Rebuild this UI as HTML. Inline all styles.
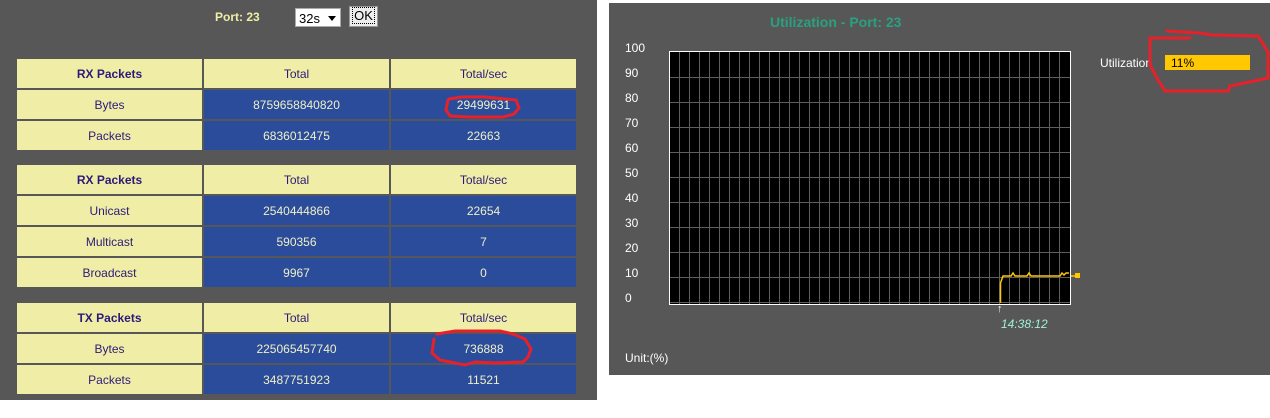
<!DOCTYPE html>
<html><head><style>
body{margin:0;width:1270px;height:418px;background:#fff;position:relative;overflow:hidden;font-family:"Liberation Sans",sans-serif;font-size:12px}
#L{position:absolute;left:0;top:0;width:597px;height:400px;background:#575757}
#R{position:absolute;left:609px;top:3px;width:661px;height:372px;background:#575757}
.tb{position:absolute;left:17px;border-collapse:separate;border-spacing:2px 2px;margin:-2px}
.tb td{width:185px;height:29px;padding:0;text-align:center;font-size:12px}
.y{background:#f0eea6;color:#2b1a7a}
.b{background:#2b4c9b;color:#eef0c8}
.h{font-weight:bold}
.abs{position:absolute}
</style></head><body>
<div id="L">
<div class="abs" style="left:215px;top:10px;color:#f0eea6;font-weight:bold;font-size:12px">Port: 23</div>
<div class="abs" style="left:295px;top:8px;width:46px;height:19px;background:#fff;border:1px solid #aaa;box-sizing:border-box;font-size:13px;padding:2px 0 0 3px">32s<span style="position:absolute;right:4px;top:7px;border-left:4px solid transparent;border-right:4px solid transparent;border-top:5px solid #000"></span></div>
<div class="abs" style="left:349px;top:6px;width:29px;height:21px;background:#eee;border:1px solid #999;box-sizing:border-box;font-size:13px;text-align:center;line-height:18px"><span style="border:1px dotted #000;padding:0 1px">OK</span></div>
<table class="tb" style="top:59px"><tr><td class="y h">RX Packets</td><td class="y">Total</td><td class="y">Total/sec</td></tr>
<tr><td class="y">Bytes</td><td class="b">8759658840820</td><td class="b">29499631</td></tr>
<tr><td class="y">Packets</td><td class="b">6836012475</td><td class="b">22663</td></tr></table>
<table class="tb" style="top:165px"><tr><td class="y h">RX Packets</td><td class="y">Total</td><td class="y">Total/sec</td></tr>
<tr><td class="y">Unicast</td><td class="b">2540444866</td><td class="b">22654</td></tr>
<tr><td class="y">Multicast</td><td class="b">590356</td><td class="b">7</td></tr>
<tr><td class="y">Broadcast</td><td class="b">9967</td><td class="b">0</td></tr></table>
<table class="tb" style="top:303px"><tr><td class="y h">TX Packets</td><td class="y">Total</td><td class="y">Total/sec</td></tr>
<tr><td class="y">Bytes</td><td class="b">225065457740</td><td class="b">736888</td></tr>
<tr><td class="y">Packets</td><td class="b">3487751923</td><td class="b">11521</td></tr></table>
</div>
<div id="R"></div>
<div class="abs" style="left:770px;top:14px;color:#2aa080;font-weight:bold;font-size:14px">Utilization - Port: 23</div>
<div class="abs" style="left:625px;top:36px;color:#fff;font-size:12px;line-height:25px">100<br>90<br>80<br>70<br>60<br>50<br>40<br>30<br>20<br>10<br>0</div>
<div class="abs" style="left:1100px;top:56px;color:#fff;font-size:12px">Utilization</div>
<div class="abs" style="left:1165px;top:55px;width:85px;height:15px;background:#ffc800;font-size:12px;line-height:16px;padding-left:6px;box-sizing:border-box">11%</div>
<div class="abs" style="left:997px;top:303px;color:#fff;font-size:11px">↑</div>
<div class="abs" style="left:1001px;top:317px;color:#9ff0d8;font-style:italic;font-size:12px">14:38:12</div>
<div class="abs" style="left:625px;top:351px;color:#fff;font-size:12px">Unit:(%)</div>
<svg class="abs" style="left:0;top:0" width="1270" height="418">
<rect x="669.5" y="51.5" width="401" height="253" fill="#000" stroke="#fff"/>
<g stroke="#5e5e5e" stroke-width="1" shape-rendering="crispEdges">
<path d="M679.5 52V304M689.5 52V304M699.5 52V304M709.5 52V304M719.5 52V304M729.5 52V304M739.5 52V304M749.5 52V304M759.5 52V304M769.5 52V304M779.5 52V304M789.5 52V304M799.5 52V304M809.5 52V304M819.5 52V304M829.5 52V304M839.5 52V304M849.5 52V304M859.5 52V304M869.5 52V304M879.5 52V304M889.5 52V304M899.5 52V304M909.5 52V304M919.5 52V304M929.5 52V304M939.5 52V304M949.5 52V304M959.5 52V304M969.5 52V304M979.5 52V304M989.5 52V304M999.5 52V304M1009.5 52V304M1019.5 52V304M1029.5 52V304M1039.5 52V304M1049.5 52V304M1059.5 52V304"/>
<path d="M670 77.5H1070M670 102.5H1070M670 127.5H1070M670 152.5H1070M670 177.5H1070M670 202.5H1070M670 227.5H1070M670 252.5H1070M670 277.5H1070M670 302.5H1070"/>
</g>
<path d="M1000.5 303V283L1003 276H1011L1013 273L1015 276H1027L1029 273L1031 276H1060L1062 273L1064 275L1066 273H1069M1071 276H1078" fill="none" stroke="#ffc800" stroke-width="1.5"/>
<rect x="1075" y="273" width="5" height="5" fill="#ffc800"/>
<g fill="none" stroke="#e8202a" stroke-width="3" stroke-linecap="round">
<path d="M449 99L462 97H485L516 100L519 108L514 114L503 117L470 117L450 116L446 110L448 100"/>
<path d="M437 334L455 331H500L513 334L525 339L531 349L528 357L523 362L495 363L475 362L465 365L440 360L432 353L434 339"/>
<path d="M1167 31L1200 33L1212 35L1258 36L1268 52L1268 78L1240 84L1230 86L1228 91L1165 91L1158 80L1150 65L1150 38L1190 38"/>
</g>
</svg>
</body></html>
